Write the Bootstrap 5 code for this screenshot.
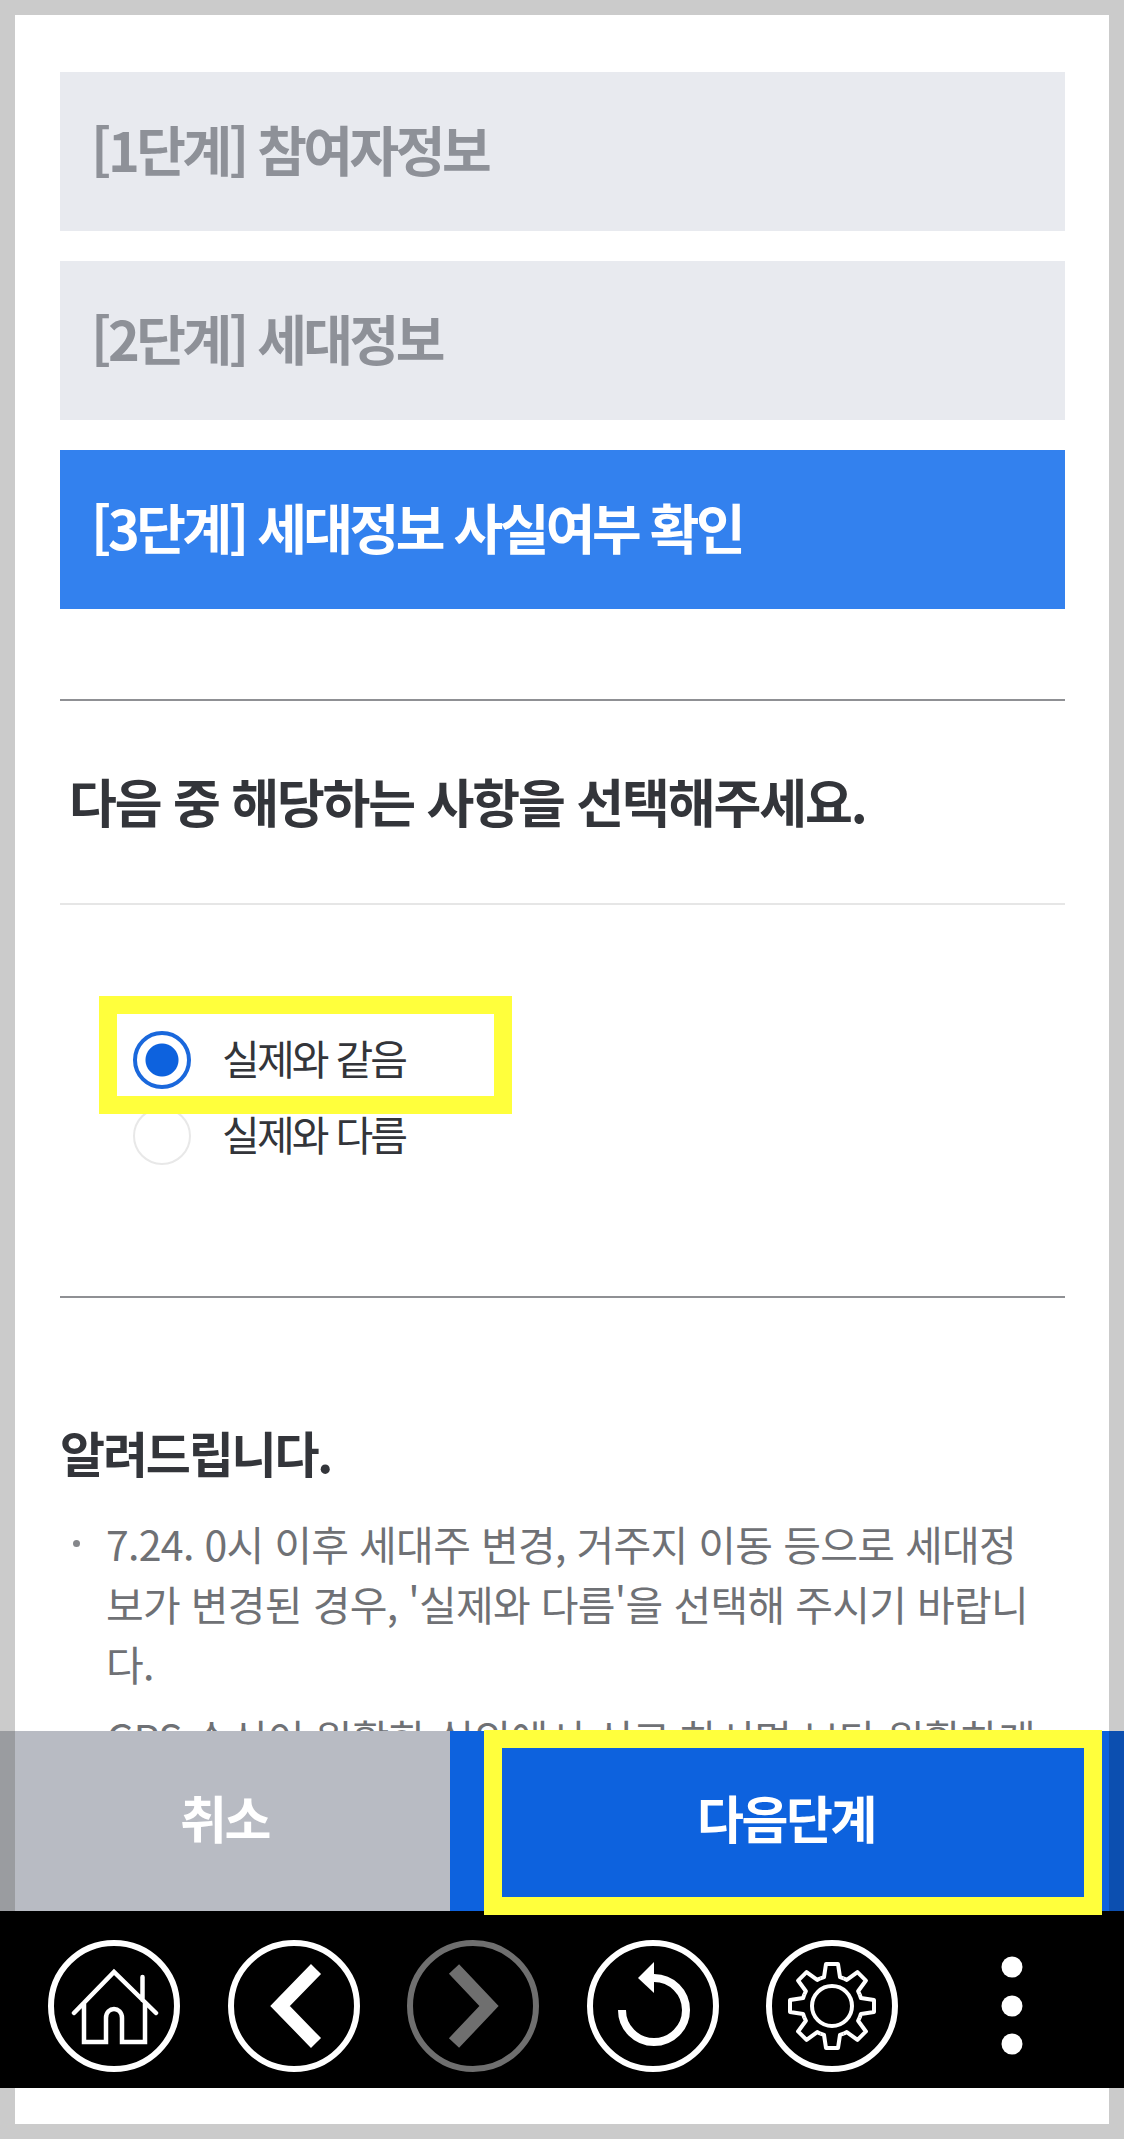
<!doctype html>
<html lang="ko">

<head>
  <meta charset="utf-8">
  <meta name="viewport" content="width=device-width, initial-scale=1">
  <title>세대정보 사실여부 확인</title>
  <link href="https://cdn.jsdelivr.net/npm/bootstrap@5.3.5/dist/css/bootstrap.min.css" rel="stylesheet">
  <style>
    html, body {
      height: 2139px;
      overflow: hidden;
    }

    body {
      background: #cbcbcb;
      font-family: "Noto Sans CJK KR", "Noto Sans", sans-serif;
      padding: 15px;
      position: relative;
    }

    .sheet {
      background: #fff;
      width: 1094px;
      height: 2109px;
      overflow: hidden;
      padding: 57px 44px 0 45px;
    }

    .step-box {
      height: 159px;
      margin-bottom: 30px;
      padding-left: 31px;
      padding-bottom: 7px;
      background: #e8eaef;
      color: #8e9198;
      font-size: 54px;
      font-weight: 700;
      letter-spacing: -3.5px;
    }

    .step-box.is-current {
      background: #3381ee;
      color: #fff;
    }

    .rule-dark {
      height: 2px;
      background: #8f9094;
    }

    .question {
      height: 204px;
      padding-left: 9px;
      padding-bottom: 2px;
      border-bottom: 2px solid #e6e6e6;
      color: #33353a;
      font-size: 52px;
      font-weight: 700;
      letter-spacing: -2.1px;
    }

    .choices {
      padding: 117px 0 122px 73px;
    }

    .choice {
      height: 76px;
      gap: 31px;
      color: #33353a;
      font-size: 41px;
      letter-spacing: -2.8px;
    }

    .choice span {
      padding-bottom: 4px;
    }

    .choice .form-check-input {
      width: 58px;
      height: 58px;
      margin: 0;
      flex: none;
      background: #fff;
      border: 2px solid #e8e8e8;
    }

    .choice .form-check-input:checked {
      background: radial-gradient(circle, #0d62de 0 16px, #fff 17px);
      border: 4px solid #1a68dc;
    }

    .notice-head {
      margin-top: 124px;
      line-height: 60px;
      color: #33353a;
      font-size: 49px;
      font-weight: 700;
      letter-spacing: -2.2px;
    }

    .notice-list {
      margin-top: 31px;
      padding-left: 46px;
      padding-right: 25px;
      list-style: none;
      color: #6f7175;
      font-size: 41px;
      line-height: 60px;
      letter-spacing: -0.7px;
    }

    .notice-list li {
      position: relative;
      margin-bottom: 14px;
    }

    .notice-list li::before {
      content: "";
      position: absolute;
      left: -33px;
      top: 27px;
      width: 7px;
      height: 7px;
      border-radius: 50%;
      background: #85878b;
    }

    .action-bar {
      position: absolute;
      left: 0;
      right: 0;
      top: 1731px;
      height: 180px;
      font-size: 51px;
      font-weight: 700;
      letter-spacing: -2.4px;
      color: #fff;
    }

    .edge-gray { width: 15px; background: #9a9ca0; }
    .edge-blue { width: 15px; background: #0c4fb0; }

    .act-cancel {
      width: 435px;
      background: #b8bbc3;
      padding-bottom: 8px;
      padding-right: 16px;
    }

    .act-next {
      background: #0d62de;
      padding: 0 55px 8px 68px;
    }

    .tool-bar {
      position: absolute;
      left: 0;
      right: 0;
      top: 1911px;
      height: 177px;
      padding-left: 44px;
      padding-top: 13px;
      background: #000;
    }

    .tool-bar svg {
      width: 140px;
      height: 140px;
      margin-right: 39.5px;
      flex: none;
    }

    .mark-box {
      position: absolute;
      border: 18px solid #ffff3c;
    }

    .mark-choice {
      left: 99px;
      top: 996px;
      width: 413px;
      height: 118px;
    }

    .mark-next {
      left: 484px;
      top: 1730px;
      width: 618px;
      height: 185px;
    }
  </style>
</head>

<body>
  <div class="sheet">
    <div class="step-box d-flex align-items-center">[1단계] 참여자정보</div>
    <div class="step-box d-flex align-items-center">[2단계] 세대정보</div>
    <div class="step-box is-current d-flex align-items-center">[3단계] 세대정보 사실여부 확인</div>

    <div class="rule-dark" style="margin-top: 90px"></div>
    <div class="question d-flex align-items-center">다음 중 해당하는 사항을 선택해주세요.</div>

    <div class="choices">
      <label class="choice d-flex align-items-center">
        <input class="form-check-input" type="radio" name="same" checked>
        <span>실제와 같음</span>
      </label>
      <label class="choice d-flex align-items-center">
        <input class="form-check-input" type="radio" name="same">
        <span>실제와 다름</span>
      </label>
    </div>

    <div class="rule-dark"></div>

    <div class="notice-head">알려드립니다.</div>
    <ul class="notice-list">
      <li>7.24. 0시 이후 세대주 변경, 거주지 이동 등으로 세대정보가 변경된 경우, '실제와 다름'을 선택해 주시기 바랍니다.</li>
      <li>GPS 수신이 원활한 실외에서 신고 하시면 보다 원활하게</li>
    </ul>
  </div>

  <div class="action-bar d-flex">
    <div class="edge-gray"></div>
    <div class="act-cancel d-flex align-items-center justify-content-center">취소</div>
    <div class="act-next flex-grow-1 d-flex align-items-center justify-content-center">다음단계</div>
    <div class="edge-blue"></div>
  </div>

  <div class="tool-bar d-flex align-items-center">
    <svg viewBox="0 0 140 140" fill="none" stroke="#fff">
      <circle cx="70" cy="70" r="63" stroke-width="6" />
      <path d="M30 77 70 36 112 77M98.500 41V64M40 67V106H62V82C62 70 78 70 78 82V106H101V67" stroke-width="4.500" stroke-linecap="round" />
    </svg>
    <svg viewBox="0 0 140 140" fill="none" stroke="#fff">
      <circle cx="70" cy="70" r="63" stroke-width="6" />
      <path d="M92 33 56 70 92 107" stroke-width="14" />
    </svg>
    <svg viewBox="0 0 140 140" fill="none" stroke="#6f6f6f">
      <circle cx="70" cy="70" r="63" stroke-width="6" />
      <path d="M51 33 86 70 51 107" stroke-width="14" />
    </svg>
    <svg viewBox="0 0 140 140" fill="none" stroke="#fff">
      <circle cx="70" cy="70" r="63" stroke-width="6" />
      <path d="M39 74A32 32 0 1 0 71 42" stroke-width="8" />
      <path d="M55 42 71 26V57Z" fill="#fff" stroke="none" />
    </svg>
    <svg viewBox="0 0 140 140" fill="none" stroke="#fff">
      <defs>
        <path id="gearTooth" d="M-11.500-27.700-8-28.900-6-42H6L8-28.900 11.500-27.700" stroke-width="4" stroke-linejoin="round" />
      </defs>
      <circle cx="70" cy="70" r="63" stroke-width="6" />
      <circle cx="70" cy="70" r="20" stroke-width="4" />
      <g transform="translate(70 70)">
        <use href="#gearTooth" />
        <use href="#gearTooth" transform="rotate(45)" />
        <use href="#gearTooth" transform="rotate(90)" />
        <use href="#gearTooth" transform="rotate(135)" />
        <use href="#gearTooth" transform="rotate(180)" />
        <use href="#gearTooth" transform="rotate(225)" />
        <use href="#gearTooth" transform="rotate(270)" />
        <use href="#gearTooth" transform="rotate(315)" />
      </g>
    </svg>
    <svg viewBox="0 0 140 140" fill="#fff">
      <circle cx="70" cy="31" r="10.500" />
      <circle cx="70" cy="70" r="10.500" />
      <circle cx="70" cy="108" r="10.500" />
    </svg>
  </div>

  <div class="mark-box mark-choice"></div>
  <div class="mark-box mark-next"></div>

  <script src="https://cdn.jsdelivr.net/npm/bootstrap@5.3.5/dist/js/bootstrap.bundle.min.js"></script>
</body>
</html>
